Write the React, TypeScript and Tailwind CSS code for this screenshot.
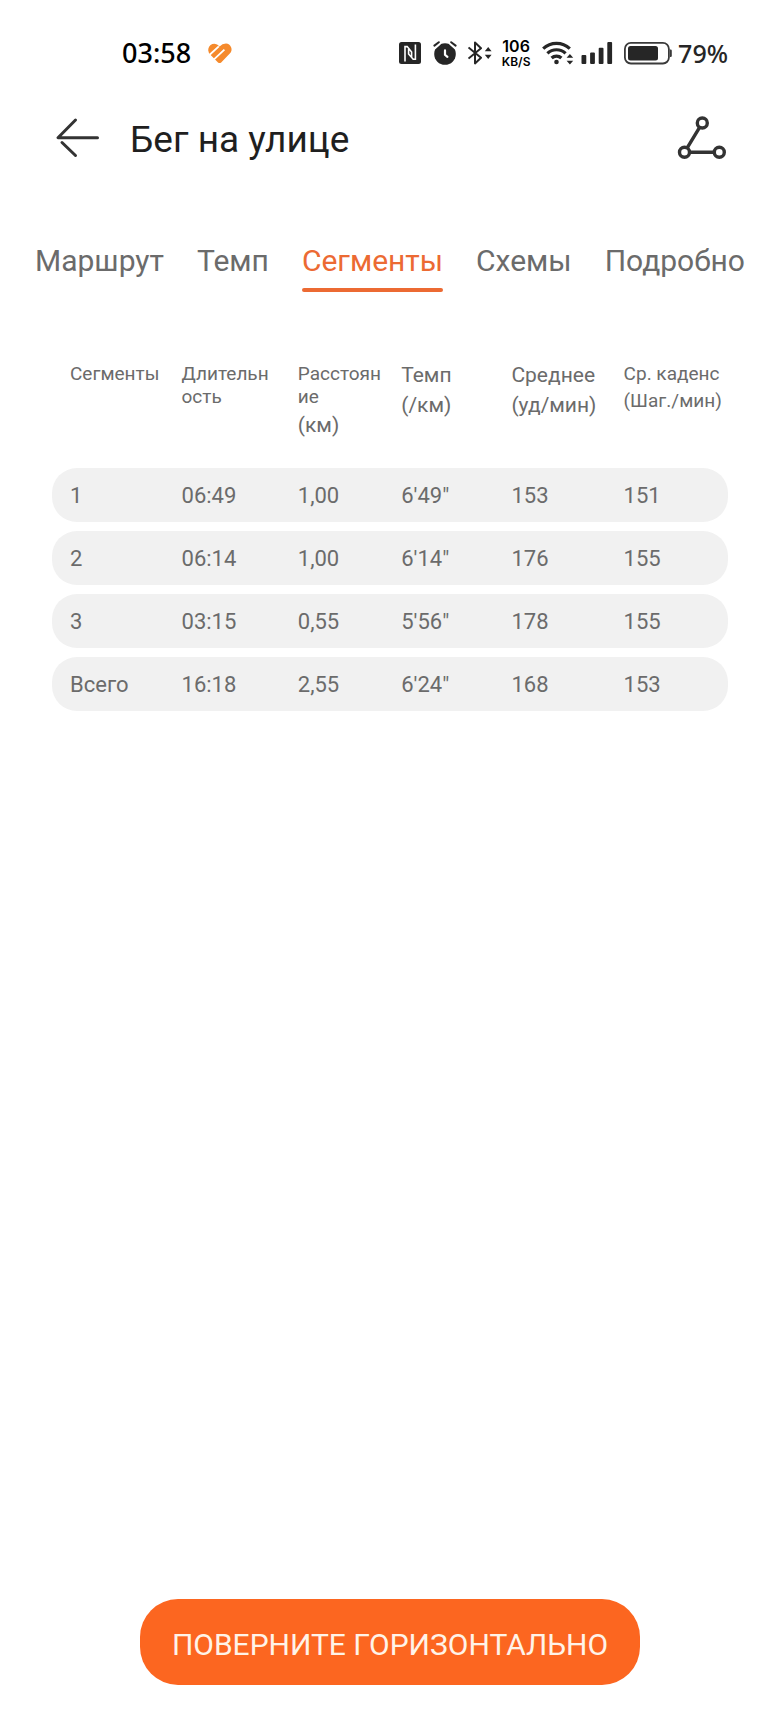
import { useState } from 'react';
import { clsx } from 'clsx';

const TABS = ['Маршрут', 'Темп', 'Сегменты', 'Схемы', 'Подробно'];

type Column = {
  lines: string[];
  unit?: string;
  small?: boolean;
  smallUnit?: boolean;
  width: string;
};

const COLUMNS: Column[] = [
  { lines: ['Сегменты'], small: true, width: 'w-[16.5%]' },
  { lines: ['Длительн', 'ость'], small: true, width: 'w-[17.2%]' },
  { lines: ['Расстоян', 'ие'], unit: '(км)', small: true, width: 'w-[15.3%]' },
  { lines: ['Темп'], unit: '(/км)', width: 'w-[16.3%]' },
  { lines: ['Среднее'], unit: '(уд/мин)', width: 'w-[16.6%]' },
  { lines: ['Ср. каденс'], unit: '(Шаг./мин)', small: true, smallUnit: true, width: 'w-[18.1%]' },
];

const ROWS = [
  ['1', '06:49', '1,00', '6\'49"', '153', '151'],
  ['2', '06:14', '1,00', '6\'14"', '176', '155'],
  ['3', '03:15', '0,55', '5\'56"', '178', '155'],
  ['Всего', '16:18', '2,55', '6\'24"', '168', '153'],
];

function HeartIcon() {
  return (
    <svg width="26" height="22" viewBox="0 0 26 22" fill="none">
      <path
        d="M12.6 4.6Q9.4.6 5.4 2 1.2 3.8 1.2 8.2q.2 2.6 2.2 4.6l7.6 7.6q1.6 1.4 3.2 0l8.6-8.8q2.6-3 1.4-6.2Q22.6 1.8 19 1.6q-3.8 0-6.4 3Z"
        fill="#f58a2c"
      />
      <path d="M2.4 13 11.8 4.4M7 17.4 17.4 7.6" stroke="#fff" strokeWidth="1.8" />
    </svg>
  );
}

function NfcIcon() {
  return (
    <svg width="22" height="22" viewBox="0 0 22 22">
      <rect width="22" height="22" rx="2.5" fill="#262626" />
      <path d="M6 19.5V4.6h2.2L12.6 10v5M16.4 2.5v14.8h-2.2L9.6 12V7" fill="none" stroke="#fff" strokeWidth="1.6" />
    </svg>
  );
}

function AlarmIcon() {
  return (
    <svg width="24" height="24" viewBox="0 0 24 24" fill="none" strokeLinecap="round">
      <circle cx="12" cy="13" r="10.8" fill="#262626" />
      <path d="M5.2 2.4 1.2 6M18.8 2.4l4 3.6" stroke="#fff" strokeWidth="5" />
      <path d="M1.4 4.6 5.8 1.2M22.6 4.6 18.2 1.2" stroke="#262626" strokeWidth="2" />
      <path d="M12 9.4v4.4l2.4 2" stroke="#fff" strokeWidth="2.2" />
    </svg>
  );
}

function BluetoothIcon() {
  return (
    <svg width="24" height="24" viewBox="0 0 24 24" fill="none">
      <path d="M.5 6.4 13 16.8 7 22.4V1.6l6 5.6L.5 17.6" stroke="#262626" strokeWidth="2" strokeLinejoin="round" />
      <path d="M16.8 10.2h6.8l-3.4-4.2ZM16.8 13.8h6.8L20.2 18Z" fill="#262626" />
    </svg>
  );
}

function WifiIcon() {
  return (
    <svg width="32" height="24" viewBox="0 0 32 24" fill="none" stroke="#262626" strokeWidth="3.2">
      <path d="M1.2 7.6a19.4 19.4 0 0 1 26.6 0" />
      <path d="M5.4 12.4a13.2 13.2 0 0 1 18.2 0" />
      <path d="M9.6 17a7.2 7.2 0 0 1 9.8 0" />
      <circle cx="14.5" cy="21" r="2.3" fill="#262626" stroke="none" />
      <path d="M24.6 16.8h6.6L27.9 13ZM24.6 19.8h6.6l-3.3 3.8Z" fill="#262626" stroke="none" />
    </svg>
  );
}

function SignalIcon() {
  return (
    <svg width="32" height="22" viewBox="0 0 32 22" fill="#262626">
      <rect x="0.5" y="13" width="4.8" height="9" rx="1" />
      <rect x="9.1" y="10.6" width="4.8" height="11.4" rx="1" />
      <rect x="17.7" y="5.8" width="4.8" height="16.2" rx="1" />
      <rect x="26.3" y="0" width="4.8" height="22" rx="1" />
    </svg>
  );
}

function BatteryIcon() {
  return (
    <svg width="48" height="24" viewBox="0 0 48 24">
      <rect x="0.9" y="1.9" width="44" height="20.6" rx="6" fill="none" stroke="#3a3a3a" strokeWidth="1.8" />
      <rect x="4" y="5" width="30" height="14.6" rx="2.5" fill="#262626" />
      <path d="M46 8.5h.6q1.2 0 1.2 1.2v5q0 1.2-1.2 1.2H46Z" fill="#3a3a3a" />
    </svg>
  );
}

function StatusBar() {
  return (
    <div className="flex h-[104px] items-center justify-between pt-px pl-[122px] pr-[52px] font-['Noto_Sans',sans-serif] text-black">
      <div className="flex items-center gap-4">
        <span className="text-[27px] leading-8 font-medium">03:58</span>
        <HeartIcon />
      </div>
      <div className="flex items-center">
        <NfcIcon />
        <span className="ml-3"><AlarmIcon /></span>
        <span className="ml-[11px]"><BluetoothIcon /></span>
        <span className="ml-2 flex w-8 flex-col items-center font-[Inter,sans-serif] font-semibold">
          <span className="text-[16px] leading-[17px]">106</span>
          <span className="text-[12px] leading-[13px]">KB/S</span>
        </span>
        <span className="ml-[10px]"><WifiIcon /></span>
        <span className="ml-[7px]"><SignalIcon /></span>
        <span className="ml-[11px]"><BatteryIcon /></span>
        <span className="ml-[6px] text-[25px] leading-8 font-medium text-[#262626]">79%</span>
      </div>
    </div>
  );
}

function Header() {
  return (
    <header className="flex h-[68px] items-center px-[52px]">
      <button type="button" aria-label="Назад" className="mr-[26px]">
        <svg width="52" height="48" viewBox="0 0 52 48" fill="none" stroke="#333" strokeWidth="3" strokeLinecap="round">
          <path d="M23.5 6 6 23.8H45.5M10 28.5 23.5 41.5" strokeLinejoin="round" />
        </svg>
      </button>
      <h1 className="flex-1 pt-1 text-[37px] leading-[44px] text-[#1f1f1f]">Бег на улице</h1>
      <button type="button" aria-label="Маршрут и точки">
        <svg width="52" height="48" viewBox="0 0 52 48" fill="none" stroke="#333" strokeWidth="3.4">
          <circle cx="26.3" cy="9" r="5" />
          <circle cx="8.5" cy="38.2" r="5" />
          <circle cx="43.3" cy="38.2" r="5" />
          <path d="M23.6 13.4 11.2 33.8M13.5 38.2h25" />
        </svg>
      </button>
    </header>
  );
}

function SegmentsTable() {
  return (
    <table className="w-full table-fixed border-separate border-spacing-x-0 border-spacing-y-[9px] text-left text-[22px] leading-[26px] text-[#6b6b6b]">
      <thead>
        <tr className="h-[97px] align-top text-[21px]">
          {COLUMNS.map((col) => (
            <th key={col.lines[0]} scope="col" className={clsx('pl-[18px] font-normal whitespace-nowrap', col.width)}>
              {col.lines.map((line) => (
                <span key={line} className={clsx('block', col.small && 'text-[19px] leading-[23px]')}>
                  {line}
                </span>
              ))}
              {col.unit && (
                <span className={clsx('mt-1 block', col.smallUnit && 'text-[19px] leading-[23px]')}>{col.unit}</span>
              )}
            </th>
          ))}
        </tr>
      </thead>
      <tbody>
        {ROWS.map((row) => (
          <tr key={row[0]} className="h-[54px]">
            {row.map((value, i) => (
              <td key={i} className="bg-[#f1f1f1] pt-[2px] pl-[18px] first:rounded-l-[25px] last:rounded-r-[25px]">
                {value}
              </td>
            ))}
          </tr>
        ))}
      </tbody>
    </table>
  );
}

export default function App() {
  const [activeTab, setActiveTab] = useState('Сегменты');

  return (
    <div className="flex min-h-screen flex-col bg-white font-[Roboto,sans-serif]">
      <StatusBar />
      <Header />

      <nav className="mt-[68px] flex justify-between px-[35px]">
        {TABS.map((tab) => (
          <button
            key={tab}
            type="button"
            onClick={() => setActiveTab(tab)}
            className={clsx(
              'flex flex-col gap-[6px] text-[30px] leading-[42px]',
              tab === activeTab ? 'text-[#ec6a33]' : 'text-[#6b6b6b]',
            )}
          >
            {tab}
            <span className={clsx('h-1 w-full rounded-full', tab === activeTab && 'bg-[#ec6a33]')} />
          </button>
        ))}
      </nav>

      <main className="mt-[61px] flex-1 px-[52px]">
        <SegmentsTable />
      </main>

      <footer className="flex justify-center pb-12">
        <button
          type="button"
          className="h-[86px] rounded-[38px] bg-[#fc6620] px-8 pt-1 text-[30px] text-[#fff3e8]"
        >
          ПОВЕРНИТЕ ГОРИЗОНТАЛЬНО
        </button>
      </footer>
    </div>
  );
}
